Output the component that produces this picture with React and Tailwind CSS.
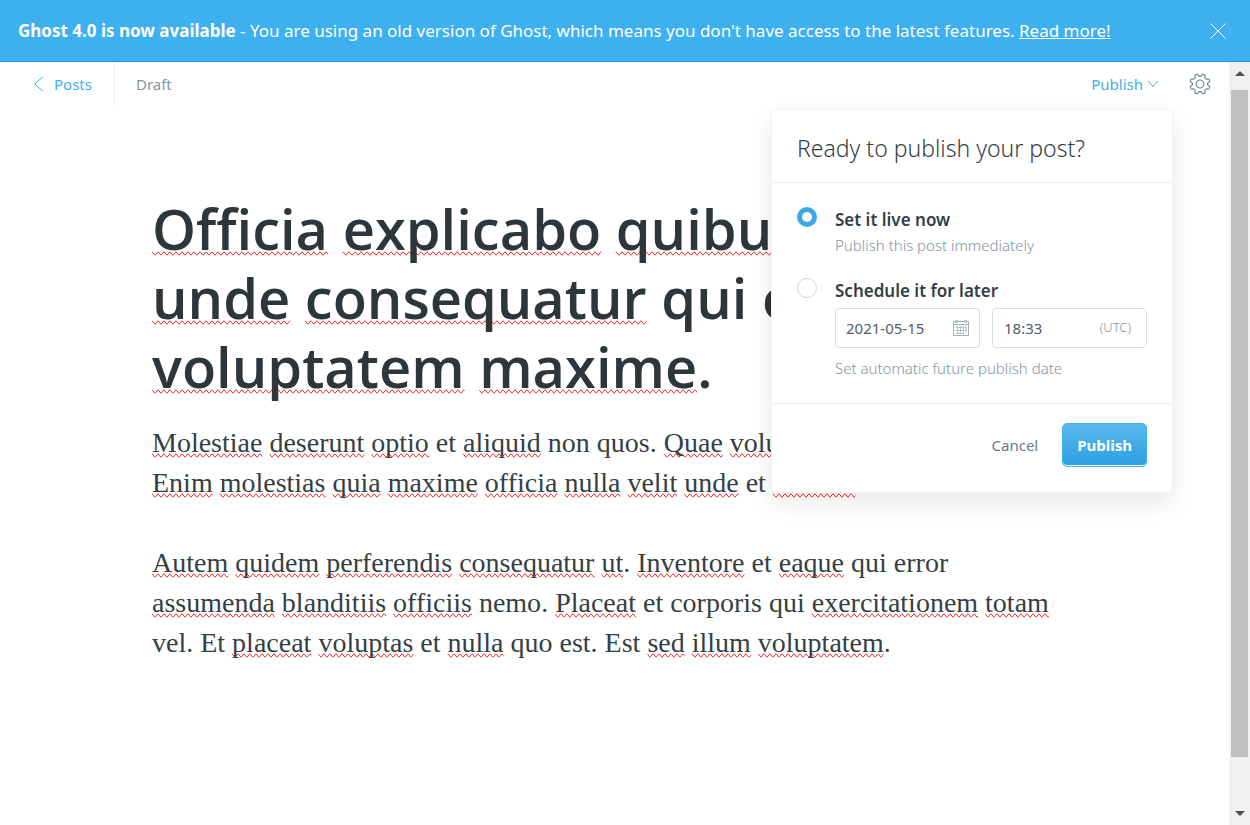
import { Fragment } from "react";

const TITLE = ["*Officia *explicabo *quibusdam", "*unde *consequatur qui omnis", "*voluptatem *maxime."];
const PARAGRAPHS = [
  ["*Molestiae *deserunt *optio et *aliquid non quos. *Quae *voluptas.", "*Enim *molestias *quia *maxime *officia *nulla *velit *unde et *dolores"],
  [
    "*Autem *quidem *perferendis *consequatur *ut. *Inventore et *eaque qui error",
    "*assumenda *blanditiis *officiis nemo. *Placeat et corporis qui *exercitationem *totam",
    "vel. Et *placeat *voluptas et *nulla quo est. Est *sed *illum *voluptatem.",
  ],
];

function Line({ text }) {
  return (
    <span className="block whitespace-nowrap">
      {text.split(" ").map((word, i) => {
        const flagged = word.startsWith("*");
        const end = word.endsWith(".");
        const bare = word.replace("*", "").replace(".", "");
        return (
          <Fragment key={i}>
            {i > 0 && " "}
            {flagged ? <span className="[text-decoration-line:spelling-error]">{bare}</span> : bare}
            {end && "."}
          </Fragment>
        );
      })}
    </span>
  );
}

// Outline of an eight-toothed cog, with valleys at the four compass points.
const COG = Array.from({ length: 160 }, (_, i) => {
  const a = (i / 160) * Math.PI * 2;
  const wave = Math.max(-0.8, Math.min(0.8, -1.5 * Math.cos(8 * a)));
  const r = 8.9 + 1.5 * wave;
  return `${(11 + r * Math.sin(a)).toFixed(2)},${(11 - r * Math.cos(a)).toFixed(2)}`;
}).join(" ");

function Gear() {
  return (
    <svg viewBox="0 0 22 22" className="size-[22px]" fill="none" stroke="currentColor" strokeWidth="1.2" strokeLinejoin="round" aria-hidden="true">
      <polygon points={COG} />
      <circle cx="11" cy="11" r="4" />
    </svg>
  );
}

function Calendar() {
  return (
    <svg viewBox="0 0 16 16" className="size-4 shrink-0 text-[#9fb2bc]" fill="none" stroke="currentColor" aria-hidden="true">
      <path d="M2 1.5H.5v14h15v-14H14M5 1.5h6M.5 4.5h15" />
      <path d="M2.5.5h2v2h-2zM11.5.5h2v2h-2z" />
      <path d="M2.5 7.500h11M2.5 10.500h11M2.5 13.500h9M4.500 6v8M7.500 6v8M10.500 6v8M13 6v6" strokeWidth=".7" />
    </svg>
  );
}

const radio =
  "size-5 shrink-0 appearance-none rounded-full border border-[#c5d9e8] bg-white checked:border-[5px] checked:border-[#3ba9e9]";

function PublishMenu() {
  return (
    <form className="absolute top-[47px] right-14 z-10 w-[402px] rounded-[5px] border border-[#f0f2f4] bg-white shadow-[0_10px_24px_rgba(0,0,0,0.09)]">
      <h2 className="border-b border-[#e3edf3] px-[25px] pt-[22px] pb-[18px] text-[23px] leading-8 font-light text-[#343f44]">
        Ready to publish your post?
      </h2>
      <div className="flex flex-col gap-[21px] border-b border-[#e3edf3] px-[25px] pt-6 pb-[23px]">
        <div className="flex gap-[18px]">
          <input type="radio" id="now" name="when" defaultChecked className={radio} />
          <div>
            <label htmlFor="now" className="block text-[17px] leading-[26px] font-semibold text-[#343f44]">Set it live now</label>
            <p className="text-[15px] leading-6 font-light text-[#8494a0]">Publish this post immediately</p>
          </div>
        </div>
        <div className="flex gap-[18px]">
          <input type="radio" id="later" name="when" className={radio} />
          <div className="min-w-0 flex-1">
            <label htmlFor="later" className="block text-[17px] leading-[26px] font-semibold text-[#343f44]">Schedule it for later</label>
            <div className="mt-1 flex gap-3">
              <label className="flex h-10 w-[145px] items-center rounded border border-[#d2e0ea] px-[10px]">
                <input aria-label="Publish date" defaultValue="2021-05-15" className="min-w-0 flex-1 text-[15px] text-[#4f5d64] outline-none" />
                <Calendar />
              </label>
              <label className="flex h-10 min-w-0 flex-1 items-center rounded border border-[#d2e0ea] pr-[15px] pl-[11px]">
                <input aria-label="Publish time" defaultValue="18:33" className="min-w-0 flex-1 text-[15px] text-[#4f5d64] outline-none" />
                <span className="text-[13px] font-light text-[#8494a0]">(UTC)</span>
              </label>
            </div>
            <p className="mt-2 text-[15px] leading-6 font-light text-[#8494a0]">Set automatic future publish date</p>
          </div>
        </div>
      </div>
      <div className="flex items-center justify-end gap-6 px-[25px] pt-[19px] pb-[25px]">
        <button type="button" className="text-[15px] text-[#667a85]">Cancel</button>
        <button type="button" className="h-11 rounded-[5px] border border-[#3eb0ef] bg-linear-to-b from-[#58b9ee] to-[#2a9fe2] px-[14px] text-[15px] font-bold text-white shadow-[inset_0_-1px_0_#fff]">
          Publish
        </button>
      </div>
    </form>
  );
}

export default function App() {
  return (
    <div className="flex h-screen flex-col overflow-hidden bg-white font-['Noto_Sans',sans-serif]">
      <aside className="flex h-[62px] shrink-0 items-center justify-between border-b border-[#1f98e0] bg-[#3eb0ef] pr-6 pl-[18px] text-[17px] text-white">
        <p><b>Ghost 4.0 is now available</b> - You are using an old version of Ghost, which means you don't have access to the latest features. <a href="#" className="underline">Read more!</a></p>
        <button type="button" aria-label="Close">
          <svg viewBox="0 0 16 16" className="size-4" stroke="currentColor" aria-hidden="true"><path d="M.5.5l15 15M15.5.5l-15 15" /></svg>
        </button>
      </aside>
      <div className="flex min-h-0 flex-1">
        <main className="relative min-w-0 flex-1">
          <header className="flex h-11 items-center justify-between pr-[18px] pl-[33px] text-[15px]">
            <div className="flex h-full items-center">
              <a href="#" className="flex h-full items-center gap-[10px] border-r border-[#e3edf3] pr-[22px] text-[#3eb0ef]">
                <svg viewBox="0 0 11 16" className="h-4 w-[11px]" fill="none" stroke="currentColor" aria-hidden="true"><path d="M10 .8 1.5 8l8.5 7.2" /></svg>
                Posts
              </a>
              <span className="pl-[21px] text-[#8496a0]">Draft</span>
            </div>
            <div className="flex items-center gap-[30px]">
              <button type="button" className="flex items-center gap-1 text-[#3eb0ef]">
                Publish
                <svg viewBox="0 0 12 8" className="h-2 w-3 text-[#5f9dbf]" fill="none" stroke="currentColor" aria-hidden="true"><path d="m1 1 5 5.5L11 1" /></svg>
              </button>
              <button type="button" aria-label="Settings" className="text-[#738a94]"><Gear /></button>
            </div>
          </header>
          <PublishMenu />
          <article className="px-[152px] pt-[88px]">
            <h1 className="font-['Open_Sans',sans-serif] text-[56px] leading-[69px] font-semibold text-[#2c363b]">{TITLE.map((t) => <Line key={t} text={t} />)}</h1>
            <div className="mt-[22px] flex flex-col gap-10 font-['Liberation_Serif',serif] text-[28px] leading-10 text-[#343f44]">
              {PARAGRAPHS.map((p) => <p key={p[0]}>{p.map((t) => <Line key={t} text={t} />)}</p>)}
            </div>
          </article>
        </main>
        <div aria-hidden="true" className="flex w-[21px] shrink-0 flex-col items-center bg-[#f1f1f1] pt-[9px] pb-[9px] text-[#505050]">
          <svg viewBox="0 0 10 5" className="h-[5px] w-[10px]" fill="currentColor"><path d="M0 5 5 0l5 5z" /></svg>
          <div className="my-[14px] flex w-[17px] flex-1 flex-col">
            <div className="flex-[667] bg-[#c1c1c1]" />
            <div className="flex-[40]" />
          </div>
          <svg viewBox="0 0 10 5" className="h-[5px] w-[10px]" fill="currentColor"><path d="M0 0h10L5 5z" /></svg>
        </div>
      </div>
    </div>
  );
}
